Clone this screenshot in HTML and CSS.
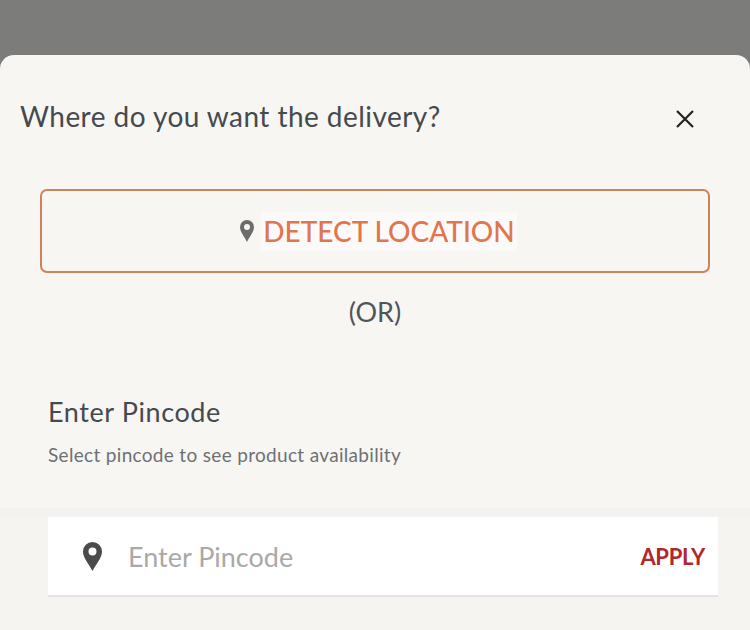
FILE: index.html
```html
<!DOCTYPE html>
<html lang="en">
<head>
<meta charset="utf-8">
<title>Delivery location</title>
<link rel="stylesheet" href="styles.css">
</head>
<body>
<main class="sheet">
  <header class="head">
    <h1 class="title">Where do you want the delivery?</h1>
    <svg class="close" viewBox="0 0 18 18" aria-label="Close"><path d="M1 1 17 17M17 1 1 17"/></svg>
  </header>
  <button class="detect">
    <svg class="pin-small" viewBox="0 0 14 22"><path fill-rule="evenodd" d="M7 0a7 7 0 0 1 7 7c0 5-4.500 9.500-7 15C4.500 16.500 0 12 0 7a7 7 0 0 1 7-7Zm0 4a3 3 0 1 0 0 6 3 3 0 0 0 0-6Z"/></svg>
    <span class="detect-text">DETECT LOCATION</span>
  </button>
  <p class="or">(OR)</p>
  <section class="pincode-info">
    <h2 class="pincode-title">Enter Pincode</h2>
    <p class="pincode-sub">Select pincode to see product availability</p>
  </section>
  <div class="lower">
    <div class="field">
      <svg class="pin-large" viewBox="0 0 19 29"><path fill-rule="evenodd" d="M9.500 0a9.500 9.500 0 0 1 9.500 9.500c0 6.500-6 12.500-9.500 19.500C6 22 0 16 0 9.500A9.500 9.500 0 0 1 9.500 0Zm0 5.500a4 4 0 1 0 0 8 4 4 0 0 0 0-8Z"/></svg>
      <span class="placeholder">Enter Pincode</span>
      <span class="apply">APPLY</span>
    </div>
  </div>
</main>
</body>
</html>
```
FILE: styles.css
```css
html, body {
  margin: 0;
  height: 630px;
  overflow: hidden;
  background: #7c7c7a;
  font-family: "Lato", "Liberation Sans", sans-serif;
}
.sheet {
  margin-top: 55px;
  height: 575px;
  background: #f7f6f3;
  border-radius: 14px 14px 0 0;
  display: flex;
  flex-direction: column;
  overflow: hidden;
  box-sizing: border-box;
}
.head {
  display: flex;
  align-items: center;
  justify-content: space-between;
  padding: 41px 56px 1px 20px;
  height: 40px;
}
.title {
  margin: 0;
  font-size: 28px;
  font-weight: 400;
  letter-spacing: 0.45px;
  color: #454a4e;
  line-height: 40px;
}
.close {
  width: 18px;
  height: 18px;
  margin-top: 6px;
  fill: none;
  stroke: #222;
  stroke-width: 2.2;
}
.detect {
  margin: 52px 40px 0;
  height: 84px;
  border: 2px solid #cf8258;
  border-radius: 7px;
  background: transparent;
  display: flex;
  align-items: center;
  justify-content: center;
  gap: 7px;
  padding: 0 0 0 7px;
  font-family: inherit;
}
.pin-small {
  width: 14px;
  height: 22px;
  fill: #6c6c6c;
}
.detect-text {
  background: #fbfaf8;
  padding: 4px 2px;
  font-size: 28px;
  font-weight: 500;
  line-height: 31px;
  color: #df7650;
}
.or {
  margin: 20px 0 0;
  text-align: center;
  font-size: 27px;
  line-height: 38px;
  color: #50555a;
}
.pincode-info {
  padding: 62px 48px 0;
}
.pincode-title {
  margin: 0;
  font-size: 27px;
  font-weight: 400;
  line-height: 38px;
  letter-spacing: 0.6px;
  color: #454a4e;
}
.pincode-sub {
  margin: 9px 0 0;
  font-size: 19px;
  line-height: 30px;
  color: #6d7175;
  letter-spacing: 0.32px;
}
.lower {
  margin-top: 38px;
  flex: 1;
  background: #f5f4f1;
  border-top: 9px solid #f2f2f0;
  padding: 0 32px 0 48px;
}
.field {
  height: 78px;
  background: #fff;
  border-bottom: 2px solid #e3e3e3;
  display: flex;
  align-items: center;
  padding: 0 13px 0 35px;
}
.pin-large {
  width: 19px;
  height: 29px;
  fill: #4b4b4b;
}
.placeholder {
  margin-left: 26px;
  flex: 1;
  font-size: 27px;
  color: #a9a9a9;
}
.apply {
  font-size: 22px;
  font-weight: 700;
  letter-spacing: -0.3px;
  color: #b0282e;
}
```
